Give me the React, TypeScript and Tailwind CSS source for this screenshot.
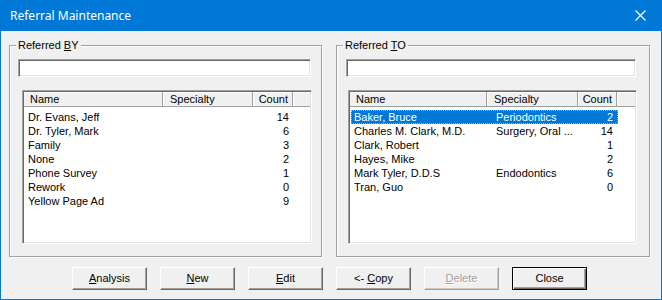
import React from "react";

type Row = { name: string; specialty: string; count: number };

const referredBy: Row[] = [
  { name: "Dr. Evans, Jeff", specialty: "", count: 14 },
  { name: "Dr. Tyler, Mark", specialty: "", count: 6 },
  { name: "Family", specialty: "", count: 3 },
  { name: "None", specialty: "", count: 2 },
  { name: "Phone Survey", specialty: "", count: 1 },
  { name: "Rework", specialty: "", count: 0 },
  { name: "Yellow Page Ad", specialty: "", count: 9 },
];

const referredTo: Row[] = [
  { name: "Baker, Bruce", specialty: "Periodontics", count: 2 },
  { name: "Charles M. Clark, M.D.", specialty: "Surgery, Oral ...", count: 14 },
  { name: "Clark, Robert", specialty: "", count: 1 },
  { name: "Hayes, Mike", specialty: "", count: 2 },
  { name: "Mark Tyler, D.D.S", specialty: "Endodontics", count: 6 },
  { name: "Tran, Guo", specialty: "", count: 0 },
];

const sunken =
  "border border-t-[#a0a0a0] border-l-[#a0a0a0] border-b-white border-r-white shadow-[inset_1px_1px_0_#696969,inset_-1px_-1px_0_#e3e3e3]";

const ListView = ({
  rows,
  cols,
  width,
  selected,
}: {
  rows: Row[];
  cols: [number, number, number];
  width: string;
  selected?: number;
}) => {
  const [c1, c2, c3] = cols;
  return (
    <div className={`${width} h-[154px] mt-[13px] bg-white flex flex-col ${sunken} p-[1px]`}>
      <div className="flex h-[15px] bg-[#f0f0f0] border-b border-[#a0a0a0] leading-[14px]">
        <div style={{ width: c1 }} className="shrink-0 pl-[6px] border-r border-[#a0a0a0] shadow-[inset_0_1px_0_#fff]">
          Name
        </div>
        <div style={{ width: c2 }} className="shrink-0 pl-[7px] border-r border-[#a0a0a0] shadow-[inset_1px_1px_0_#fff]">
          Specialty
        </div>
        <div style={{ width: c3 }} className="shrink-0 pr-[4px] text-right border-r border-[#a0a0a0] shadow-[inset_1px_1px_0_#fff]">
          Count
        </div>
        <div className="flex-1 shadow-[inset_1px_1px_0_#fff]" />
      </div>
      <div className="pt-[3px]">
        {rows.map((r, i) => {
          const sel = i === selected;
          return (
            <div
              key={r.name}
              className={`flex h-[14px] leading-[13px] ml-[1px] border border-dotted ${
                sel ? "bg-[#0078d7] text-white border-[#e8a040]" : "border-transparent"
              }`}
              style={{ width: c1 + c2 + c3 }}
            >
              <div style={{ width: c1 - 1 }} className="shrink-0 pl-[2px] whitespace-nowrap overflow-hidden">
                {r.name}
              </div>
              <div style={{ width: c2 }} className="shrink-0 pl-[8px] whitespace-nowrap overflow-hidden">
                {r.specialty}
              </div>
              <div style={{ width: c3 - 1 }} className="shrink-0 pr-[4px] text-right">
                {r.count}
              </div>
            </div>
          );
        })}
      </div>
    </div>
  );
};

const GroupBox = ({
  label,
  accel,
  rest,
  children,
  width,
}: {
  label: string;
  accel: string;
  rest: string;
  children: React.ReactNode;
  width: string;
}) => (
  <div
    className={`relative ${width} h-[212px] border border-[#a0a0a0] shadow-[inset_1px_1px_0_#fff,1px_1px_0_#fff]`}
  >
    <span className="absolute -top-[8px] left-[6px] px-[2px] bg-[#f0f0f0] leading-[14px]">
      {label}
      <u>{accel}</u>
      {rest}
    </span>
    {children}
  </div>
);

const Button = ({
  children,
  disabled,
  isDefault,
}: {
  children: React.ReactNode;
  disabled?: boolean;
  isDefault?: boolean;
}) => {
  let cls =
    "border border-t-white border-l-white border-b-[#696969] border-r-[#696969] shadow-[inset_-1px_-1px_0_#a0a0a0]";
  if (isDefault)
    cls =
      "border border-black shadow-[inset_1px_1px_0_#fff,inset_-1px_-1px_0_#696969,inset_-2px_-2px_0_#a0a0a0]";
  if (disabled)
    cls =
      "border border-t-white border-l-white border-b-[#a0a0a0] border-r-[#a0a0a0] shadow-[inset_-1px_-1px_0_#c8c8c8] text-[#a0a0a0] [text-shadow:1px_1px_0_#fff]";
  return (
    <div className={`w-[75px] h-[23px] flex items-center justify-center bg-[#f0f0f0] ${cls}`}>
      <span>{children}</span>
    </div>
  );
};

export default function App() {
  return (
    <div className="w-[662px] h-[300px] bg-[#0078d7] px-[1px] pb-[1px] flex flex-col font-['Liberation_Sans',Arial,sans-serif] text-[11px] text-black">
      <div className="h-[31px] shrink-0 flex items-center justify-between pl-[9px] pr-[10px] text-white text-[12px] font-['Noto_Sans',sans-serif]">
        <span>Referral Maintenance</span>
        <svg width="11" height="11" viewBox="0 0 11 11" className="mr-[5px]">
          <path d="M0.5 0.5 L10.5 10.5 M10.5 0.5 L0.5 10.5" stroke="#fff" strokeWidth="1.2" />
        </svg>
      </div>
      <div className="flex-1 bg-[#f0f0f0] flex flex-col">
        <div className="flex gap-[14px] ml-[8px] mt-[14px]">
          <GroupBox label="Referred " accel="B" rest="Y" width="w-[313px]">
            <div className="pl-[8px] pt-[13px]">
              <div className={`w-[293px] h-[18px] bg-white ${sunken}`} />
              <div className="pl-[4px]">
                <ListView rows={referredBy} cols={[139, 90, 40]} width="w-[290px]" />
              </div>
            </div>
          </GroupBox>
          <GroupBox label="Referred " accel="T" rest="O" width="w-[314px]">
            <div className="pl-[9px] pt-[13px]">
              <div className={`w-[290px] h-[18px] bg-white ${sunken}`} />
              <div className="pl-[2px]">
                <ListView rows={referredTo} cols={[137, 91, 39]} width="w-[289px]" selected={0} />
              </div>
            </div>
          </GroupBox>
        </div>
        <div className="flex gap-[13px] ml-[71px] mt-[10px]">
          <Button>
            <u>A</u>nalysis
          </Button>
          <Button>
            <u>N</u>ew
          </Button>
          <Button>
            <u>E</u>dit
          </Button>
          <Button>
            &lt;- <u>C</u>opy
          </Button>
          <Button disabled>
            <u>D</u>elete
          </Button>
          <Button isDefault>Close</Button>
        </div>
      </div>
    </div>
  );
}
